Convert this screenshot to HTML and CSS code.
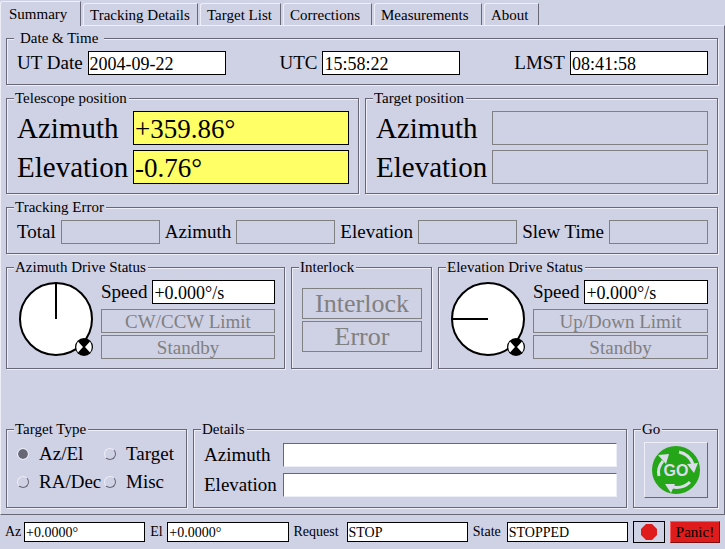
FILE: index.html
```html
<!DOCTYPE html>
<html lang="en">
<head>
<meta charset="utf-8">
<title>Telescope Control</title>
<link rel="stylesheet" href="styles.css">
</head>
<body>
<div class="app">
  <nav class="tabs" role="tablist">
    <button class="tab tab-active" role="tab" aria-selected="true">Summary</button>
    <button class="tab" role="tab">Tracking Details</button>
    <button class="tab" role="tab">Target List</button>
    <button class="tab" role="tab">Corrections</button>
    <button class="tab" role="tab">Measurements</button>
    <button class="tab" role="tab">About</button>
  </nav>
  <main class="panel">
    <fieldset class="group">
      <legend class="legend-wide">Date &amp; Time</legend>
      <div class="times">
        <div class="pair"><label for="ut">UT Date</label><input class="box clock" id="ut" value="2004-09-22" readonly></div>
        <div class="pair"><label for="utc">UTC</label><input class="box clock" id="utc" value="15:58:22" readonly></div>
        <div class="pair"><label for="lmst">LMST</label><input class="box clock" id="lmst" value="08:41:58" readonly></div>
      </div>
    </fieldset>

    <div class="row halves">
      <fieldset class="group">
        <legend>Telescope position</legend>
        <div class="position">
          <label for="tel-az">Azimuth</label><input class="box big active" id="tel-az" value="+359.86°" readonly>
          <label for="tel-el">Elevation</label><input class="box big active" id="tel-el" value="-0.76°" readonly>
        </div>
      </fieldset>
      <fieldset class="group">
        <legend>Target position</legend>
        <div class="position">
          <label for="tgt-az">Azimuth</label><input class="box big off" id="tgt-az" disabled>
          <label for="tgt-el">Elevation</label><input class="box big off" id="tgt-el" disabled>
        </div>
      </fieldset>
    </div>

    <fieldset class="group">
      <legend>Tracking Error</legend>
      <div class="errors">
        <label for="err-total">Total</label><input class="box off" id="err-total" disabled>
        <label for="err-az">Azimuth</label><input class="box off" id="err-az" disabled>
        <label for="err-el">Elevation</label><input class="box off" id="err-el" disabled>
        <label for="slew">Slew Time</label><input class="box off" id="slew" disabled>
      </div>
    </fieldset>

    <div class="row drives">
      <fieldset class="group">
        <legend>Azimuth Drive Status</legend>
        <div class="drive">
          <svg class="dial" viewBox="0 0 79 79" aria-hidden="true">
            <circle cx="39" cy="39" r="36" fill="#fff" stroke="#000" stroke-width="2"/>
            <path d="M39 39V3" stroke="#000" stroke-width="2"/>
            <circle cx="67" cy="67" r="9"/>
            <path d="M61 61.500Q57.500 67 61 72.500L66 67ZM73 61.500Q76.500 67 73 72.500L68 67Z" fill="#fff"/>
          </svg>
          <div class="readings">
            <div class="pair"><label for="az-speed">Speed</label><input class="box" id="az-speed" value="+0.000°/s" readonly></div>
            <div class="lamps"><div class="lamp">CW/CCW Limit</div><div class="lamp">Standby</div></div>
          </div>
        </div>
      </fieldset>
      <fieldset class="group">
        <legend>Interlock</legend>
        <div class="interlock"><div class="lamp lamp-big">Interlock</div><div class="lamp lamp-big">Error</div></div>
      </fieldset>
      <fieldset class="group">
        <legend>Elevation Drive Status</legend>
        <div class="drive">
          <svg class="dial" viewBox="0 0 79 79" aria-hidden="true">
            <circle cx="39" cy="39" r="36" fill="#fff" stroke="#000" stroke-width="2"/>
            <path d="M39 39H3" stroke="#000" stroke-width="2"/>
            <circle cx="67" cy="67" r="9"/>
            <path d="M61 61.500Q57.500 67 61 72.500L66 67ZM73 61.500Q76.500 67 73 72.500L68 67Z" fill="#fff"/>
          </svg>
          <div class="readings">
            <div class="pair"><label for="el-speed">Speed</label><input class="box" id="el-speed" value="+0.000°/s" readonly></div>
            <div class="lamps"><div class="lamp">Up/Down Limit</div><div class="lamp">Standby</div></div>
          </div>
        </div>
      </fieldset>
    </div>

    <div class="row target">
      <fieldset class="group">
        <legend>Target Type</legend>
        <div class="types">
          <label class="type"><input type="radio" name="type" checked><span>Az/El</span></label>
          <label class="type"><input type="radio" name="type"><span>Target</span></label>
          <label class="type"><input type="radio" name="type"><span>RA/Dec</span></label>
          <label class="type"><input type="radio" name="type"><span>Misc</span></label>
        </div>
      </fieldset>
      <fieldset class="group">
        <legend>Details</legend>
        <div class="details">
          <label for="d-az">Azimuth</label><input class="box sunken" id="d-az">
          <label for="d-el">Elevation</label><input class="box sunken" id="d-el">
        </div>
      </fieldset>
      <fieldset class="group">
        <legend>Go</legend>
        <button class="go" aria-label="Go">
          <svg class="go-icon" viewBox="0 0 48 48">
            <circle cx="24" cy="24" r="24" fill="#25a518"/>
            <g fill="none" stroke="#dcdcec" stroke-width="3">
              <path d="M7 30Q5 22 11 15"/>
              <path d="M27 6Q37 8 41 18"/>
              <path d="M38 36Q31 43 20 41"/>
            </g>
            <g fill="#dcdcec">
              <path d="M6 9L17 8L14 18Z"/>
              <path d="M35 18L46 17L42 27Z"/>
              <path d="M13 38L23 38L19 47Z"/>
            </g>
            <text class="go-text" x="24" y="30" text-anchor="middle">GO</text>
          </svg>
        </button>
      </fieldset>
    </div>
  </main>

  <footer class="status">
    <label for="s-az">Az</label><input class="box mini" id="s-az" value="+0.0000°" readonly>
    <label for="s-el">El</label><input class="box mini" id="s-el" value="+0.0000°" readonly>
    <label for="s-req">Request</label><input class="box mini" id="s-req" value="STOP" readonly>
    <label for="s-state">State</label><input class="box mini" id="s-state" value="STOPPED" readonly>
    <button class="stop" aria-label="Stop">
      <svg class="stop-icon" viewBox="0 0 16 16"><path d="M5 0H11L16 5V11L11 16H5L0 11V5Z" fill="#e01b1b"/></svg>
    </button>
    <button class="panic">Panic!</button>
  </footer>
</div>
</body>
</html>
```
FILE: styles.css
```css
:root {
  --bg: #cfd1e5;
  --dark: #676775;
  --light: #eeeef6;
  --off: #808080;
}

* { box-sizing: border-box; }

body {
  margin: 0;
  background: var(--bg);
  color: #000;
  font: 19px/24px "Liberation Serif", serif;
}

input, button {
  font: inherit;
  color: inherit;
  border-radius: 0;
  margin: 0;
}

input { min-width: 0; }

label { white-space: nowrap; }

.app {
  display: flex;
  flex-direction: column;
  min-height: 100vh;
}

/* Tabs */
.tabs {
  display: grid;
  grid-template-columns: 81px 115px 81px 89px 108px 55px;
  column-gap: 2px;
  align-items: end;
  height: 25px;
}

.tab {
  height: 22px;
  padding: 0 0 0 6px;
  border: 1px solid var(--light);
  border-right-color: var(--dark);
  border-bottom: 0;
  border-radius: 3px 0 0 0;
  background: var(--bg);
  font-size: 15px;
  line-height: 20px;
  text-align: left;
  white-space: nowrap;
}

.tab-active {
  position: relative;
  height: 25px;
  margin-bottom: -1px;
  padding-left: 8px;
}

/* Main panel and group boxes */
.panel {
  flex: 1;
  display: flex;
  flex-direction: column;
  gap: 7px;
  padding: 6px 6px 6px 5px;
  border: 1px solid var(--dark);
  border-top-color: var(--light);
  border-left-color: var(--light);
}

.group {
  min-width: 0;
  margin: 0;
  padding: 6px 9px 9px 10px;
  border: 1px solid var(--dark);
  box-shadow: 1px 1px 0 var(--light), inset 1px 1px 0 var(--light);
}

legend {
  height: 13px;
  margin-left: -3px;
  padding: 0 2px 0 1px;
  background: var(--bg);
  font-size: 15px;
  line-height: 13px;
}

.legend-wide { padding: 0 6px; }

.row {
  display: grid;
  gap: 6px;
}

.halves { grid-template-columns: 1fr 1fr; }
.drives { grid-template-columns: 279fr 141fr 280fr; }

.target {
  grid-template-columns: 181px 1fr 85px;
  margin-top: auto;
}

/* Value boxes */
.box {
  width: 100%;
  height: 24px;
  padding: 1px 1px 0;
  border: 1px solid #000;
  background: #fff;
  font-size: 18px;
}

.clock { width: 138px; }

.big {
  height: 34px;
  font-size: 27px;
}

.active { background: #ffff66; }

.off {
  border-color: var(--off);
  background: transparent;
}

.sunken {
  border-color: var(--dark) var(--light) var(--light) var(--dark);
}

.mini {
  height: 20px;
  font-size: 14px;
}

.pair, .errors {
  display: flex;
  gap: 5px;
}

.times {
  display: flex;
  justify-content: space-between;
}

.position {
  display: grid;
  grid-template-columns: 111px 1fr;
  gap: 5px;
  font-size: 29px;
  line-height: 34px;
}

/* Drive status */
.drive {
  display: flex;
  gap: 5px;
}

.dial {
  flex: none;
  width: 79px;
  height: 79px;
}

.readings {
  flex: 1;
  min-width: 0;
  display: flex;
  flex-direction: column;
  gap: 5px;
}

.lamps, .interlock {
  display: flex;
  flex-direction: column;
  gap: 2px;
}

.interlock {
  height: 79px;
  justify-content: center;
}

.lamp {
  height: 24px;
  border: 1px solid var(--off);
  color: var(--off);
  line-height: 23px;
  text-align: center;
  white-space: nowrap;
}

.lamp-big {
  height: 31px;
  font-size: 26px;
  line-height: 30px;
}

/* Target selection */
.types {
  display: grid;
  grid-template-columns: 82px 1fr;
  row-gap: 4px;
  column-gap: 5px;
}

.type {
  display: flex;
  align-items: center;
  gap: 10px;
}

.type input {
  appearance: none;
  flex: none;
  width: 12px;
  height: 12px;
  border: 1px solid var(--dark);
  border-top-color: var(--light);
  border-left-color: var(--light);
  border-radius: 50%;
}

.type input:checked {
  border-color: var(--light);
  background: var(--dark);
  background-clip: padding-box;
}

.details {
  display: grid;
  grid-template-columns: 74px 1fr;
  gap: 6px 5px;
  padding-top: 1px;
}

.go {
  display: flex;
  align-items: center;
  justify-content: center;
  width: 100%;
  height: 56px;
  padding: 0;
  border: 1px solid var(--dark);
  border-top-color: var(--light);
  border-left-color: var(--light);
  background: var(--bg);
}

.go-icon {
  width: 48px;
  height: 48px;
}

.go-text {
  fill: #dcdcec;
  font: bold 16px "Liberation Sans", sans-serif;
}

/* Status bar */
.status {
  display: grid;
  grid-template-columns: 14px 1fr 12px 1fr 48px 1fr 29px 1fr 32px 50px;
  align-items: center;
  gap: 5px;
  height: 34px;
  padding: 0 5px;
  font-size: 14px;
}

.stop {
  display: flex;
  align-items: center;
  justify-content: center;
  height: 22px;
  padding: 0;
  border: 1px solid #000;
  background: var(--bg);
}

.stop-icon {
  width: 16px;
  height: 16px;
}

.panic {
  height: 22px;
  padding: 0;
  border: 1px solid #7c1010;
  border-top-color: #f06060;
  border-left-color: #f06060;
  background: #e01b1b;
  font-size: 15px;
  line-height: 20px;
}
```
